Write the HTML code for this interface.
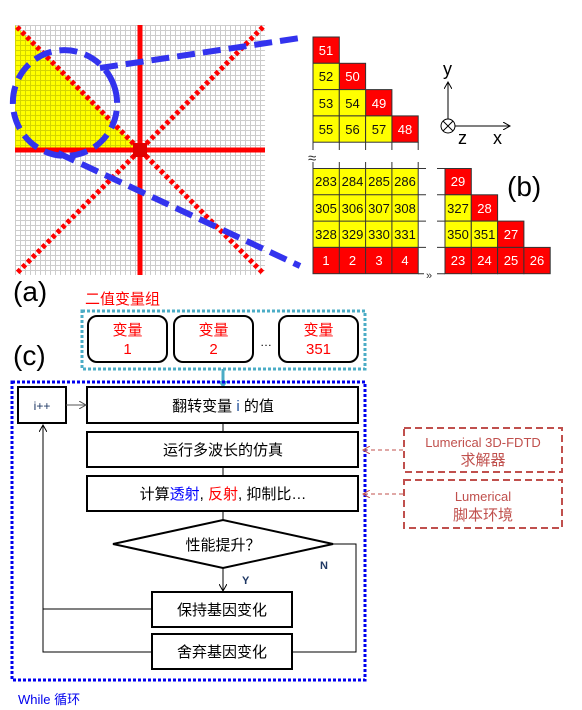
<!DOCTYPE html>
<html><head><meta charset="utf-8"><style>
html,body{margin:0;padding:0;background:#fff;}
svg{display:block;}
text{font-family:"Liberation Sans","Noto Sans CJK SC",sans-serif;}
</style></head><body>
<svg width="582" height="710" viewBox="0 0 582 710" xmlns="http://www.w3.org/2000/svg">
<defs>
<pattern id="g" x="15" y="25" width="5" height="5" patternUnits="userSpaceOnUse">
<rect width="5" height="5" fill="#fff"/>
<path d="M0 0.5H5M0.5 0V5" stroke="#cccccc" stroke-width="1"/>
</pattern>
<pattern id="gy" x="15" y="25" width="5" height="5" patternUnits="userSpaceOnUse">
<rect width="5" height="5" fill="#ffff00"/>
<path d="M0 0.5H5M0.5 0V5" stroke="#d4d400" stroke-width="1"/>
</pattern>
<marker id="ah" markerWidth="8" markerHeight="8" refX="7" refY="4" orient="auto"><path d="M0 0L7 4L0 8" fill="none" stroke="#000" stroke-width="1"/></marker>
<marker id="ahg" markerWidth="8" markerHeight="8" refX="7" refY="4" orient="auto"><path d="M0 0L7 4L0 8" fill="none" stroke="#555" stroke-width="1"/></marker>
<marker id="ahr" markerWidth="8" markerHeight="8" refX="7" refY="4" orient="auto"><path d="M0 0L7 4L0 8" fill="none" stroke="#c0504d" stroke-width="1"/></marker>
</defs>
<rect x="15" y="25" width="250" height="250" fill="url(#g)"/>
<polygon points="15,25 15,150 140,150" fill="url(#gy)"/>
<g stroke="#ff0000">
<line x1="140" y1="25" x2="140" y2="275" stroke-width="5"/>
<line x1="15" y1="150" x2="265" y2="150" stroke-width="5"/>
<line x1="17" y1="27" x2="263" y2="273" stroke-width="5" stroke-dasharray="4 3"/>
<line x1="263" y1="27" x2="17" y2="273" stroke-width="5" stroke-dasharray="4 3"/>
</g>
<rect x="133" y="143" width="14" height="14" fill="#e00000"/>
<g stroke="#3333ee" stroke-width="6" fill="none" stroke-dasharray="18 8">
<ellipse cx="65" cy="103" rx="52" ry="53" transform="rotate(-20 65 103)"/>
<line x1="100" y1="68" x2="300" y2="38"/>
<line x1="58" y1="153" x2="300" y2="266"/>
</g>
<g stroke="#333" stroke-width="1" font-size="13" text-anchor="middle">
<g fill="#ff0000">
<rect x="313" y="37" width="26.3" height="26.3"/>
<rect x="339.3" y="63.3" width="26.3" height="26.3"/>
<rect x="365.6" y="89.6" width="26.3" height="26.3"/>
<rect x="391.9" y="115.9" width="26.3" height="26.3"/>
</g>
<g fill="#ffff00">
<rect x="313" y="63.3" width="26.3" height="26.3"/>
<rect x="313" y="89.6" width="26.3" height="26.3"/>
<rect x="339.3" y="89.6" width="26.3" height="26.3"/>
<rect x="313" y="115.9" width="26.3" height="26.3"/>
<rect x="339.3" y="115.9" width="26.3" height="26.3"/>
<rect x="365.6" y="115.9" width="26.3" height="26.3"/>
</g>
<path d="M313 142V150M339.3 142V150M365.6 142V150M391.9 142V150M418.2 142V150M313 162V169M339.3 162V169M365.6 162V169M391.9 162V169M418.2 162V169" fill="none"/>
<rect x="313" y="168.5" width="105.2" height="78.9" fill="#ffff00"/>
<path d="M339.3 168.5V247.4M365.6 168.5V247.4M391.9 168.5V247.4M313 194.8H418.2M313 221.1H418.2" fill="none"/>
<rect x="313" y="247.4" width="105.2" height="26.3" fill="#ff0000"/>
<path d="M339.3 247.4V273.7M365.6 247.4V273.7M391.9 247.4V273.7" fill="none"/>
<path d="M418 168.5H426M418 194.8H426M418 221.1H426M418 247.4H426M418 273.7H424" fill="none"/>
<path d="M437 168.5H445M437 194.8H445M437 221.1H445M437 247.4H445M437 273.7H445" fill="none"/>
<rect x="445" y="168.5" width="26.3" height="26.3" fill="#ff0000"/>
<rect x="445" y="194.8" width="26.3" height="26.3" fill="#ffff00"/>
<rect x="471.3" y="194.8" width="26.3" height="26.3" fill="#ff0000"/>
<rect x="445" y="221.1" width="26.3" height="26.3" fill="#ffff00"/>
<rect x="471.3" y="221.1" width="26.3" height="26.3" fill="#ffff00"/>
<rect x="497.6" y="221.1" width="26.3" height="26.3" fill="#ff0000"/>
<rect x="445" y="247.4" width="26.3" height="26.3" fill="#ff0000"/>
<rect x="471.3" y="247.4" width="26.3" height="26.3" fill="#ff0000"/>
<rect x="497.6" y="247.4" width="26.3" height="26.3" fill="#ff0000"/>
<rect x="523.9" y="247.4" width="26.3" height="26.3" fill="#ff0000"/>
</g>
<g font-size="13" text-anchor="middle" stroke="none">
<g fill="#fff">
<text x="326" y="55">51</text><text x="352.5" y="81">50</text><text x="379" y="108">49</text><text x="405" y="134">48</text>
<text x="326" y="265">1</text><text x="352.5" y="265">2</text><text x="379" y="265">3</text><text x="405" y="265">4</text>
<text x="458" y="186">29</text><text x="484.5" y="213">28</text><text x="511" y="239">27</text>
<text x="458" y="265">23</text><text x="484.5" y="265">24</text><text x="511" y="265">25</text><text x="537" y="265">26</text>
</g>
<g fill="#111">
<text x="326" y="81">52</text><text x="326" y="108">53</text><text x="352.5" y="108">54</text>
<text x="326" y="134">55</text><text x="352.5" y="134">56</text><text x="379" y="134">57</text>
<text x="326" y="186">283</text><text x="352.5" y="186">284</text><text x="379" y="186">285</text><text x="405" y="186">286</text>
<text x="326" y="213">305</text><text x="352.5" y="213">306</text><text x="379" y="213">307</text><text x="405" y="213">308</text>
<text x="326" y="239">328</text><text x="352.5" y="239">329</text><text x="379" y="239">330</text><text x="405" y="239">331</text>
<text x="458" y="213">327</text><text x="458" y="239">350</text><text x="484.5" y="239">351</text>
</g>
</g>
<text x="308" y="163" font-size="15" fill="#333">≈</text>
<text x="426" y="279" font-size="11" fill="#333">»</text>
<g stroke="#000" stroke-width="1" fill="none">
<line x1="448" y1="126" x2="448" y2="82" marker-end="url(#ah)"/>
<line x1="448" y1="126" x2="510" y2="126" marker-end="url(#ah)"/>
<circle cx="448" cy="126" r="7" fill="#fff"/>
<path d="M443 121L453 131M453 121L443 131"/>
</g>
<text x="443" y="75" font-size="18" fill="#000">y</text>
<text x="458" y="144" font-size="18" fill="#000">z</text>
<text x="493" y="144" font-size="18" fill="#000">x</text>
<text x="507" y="196" font-size="28" fill="#000">(b)</text>
<text x="13" y="301" font-size="28" fill="#000">(a)</text>
<text x="13" y="365" font-size="28" fill="#000">(c)</text>
<text x="85" y="304" font-size="15" fill="#ff0000">二值变量组</text>
<rect x="82" y="311" width="283" height="58" fill="none" stroke="#4bacc6" stroke-width="3" stroke-dasharray="3 2"/>
<g fill="#fff" stroke="#000" stroke-width="2">
<rect x="88" y="316" width="79" height="46" rx="9"/>
<rect x="174" y="316" width="79" height="46" rx="9"/>
<rect x="279" y="316" width="79" height="46" rx="9"/>
</g>
<g font-size="15" fill="#ff0000" text-anchor="middle">
<text x="127.5" y="335">变量</text><text x="127.5" y="354">1</text>
<text x="213.5" y="335">变量</text><text x="213.5" y="354">2</text>
<text x="318.5" y="335">变量</text><text x="318.5" y="354">351</text>
</g>
<text x="266" y="346" font-size="12" fill="#000" text-anchor="middle">…</text>
<line x1="223" y1="369" x2="223" y2="386" stroke="#4bacc6" stroke-width="3"/>
<path d="M218 381L223 388L228 381Z" fill="#4bacc6"/>
<rect x="12" y="382" width="353" height="298" fill="none" stroke="#0000ee" stroke-width="3" stroke-dasharray="3 2"/>
<g fill="#fff" stroke="#000" stroke-width="2">
<rect x="18" y="387" width="48" height="36"/>
<rect x="87" y="387" width="271" height="36"/>
<rect x="87" y="432" width="271" height="35"/>
<rect x="87" y="476" width="271" height="35"/>
<polygon points="113,544 223,520 333,544 223,568"/>
<rect x="152" y="592" width="140" height="35"/>
<rect x="152" y="634" width="140" height="35"/>
</g>
<g stroke="#000" stroke-width="1" fill="none">
<line x1="223" y1="423" x2="223" y2="432"/>
<line x1="223" y1="467" x2="223" y2="476"/>
<line x1="223" y1="511" x2="223" y2="520"/>
<line x1="223" y1="568" x2="223" y2="591" marker-end="url(#ah)"/>
<path d="M152 609H43M152 652H43V425" marker-end="url(#ah)"/>
<path d="M333 544H356V652H292"/>
</g>
<line x1="66" y1="405" x2="86" y2="405" stroke="#555" stroke-width="1" marker-end="url(#ahg)"/>
<text x="42" y="410" font-size="12" fill="#1f3864" text-anchor="middle">i++</text>
<g font-size="15" fill="#000" text-anchor="middle">
<text x="223" y="411">翻转变量 <tspan fill="#1f4e99">i</tspan> 的值</text>
<text x="223" y="455">运行多波长的仿真</text>
<text x="223" y="499">计算<tspan fill="#0000ff">透射</tspan>, <tspan fill="#ff0000">反射</tspan>, 抑制比…</text>
<text x="223" y="550">性能提升？</text>
<text x="222" y="615">保持基因变化</text>
<text x="222" y="657">舍弃基因变化</text>
</g>
<text x="242" y="584" font-size="11" font-weight="bold" fill="#1f3864">Y</text>
<text x="320" y="569" font-size="11" font-weight="bold" fill="#1f3864">N</text>
<text x="18" y="704" font-size="13" fill="#0000ee">While 循环</text>
<g fill="none" stroke="#c0504d" stroke-width="2" stroke-dasharray="7 4">
<rect x="404" y="428" width="158" height="44"/>
<rect x="404" y="480" width="158" height="48"/>
</g>
<g stroke="#c0504d" stroke-width="1" stroke-dasharray="4 3">
<line x1="403" y1="450" x2="363" y2="450" marker-end="url(#ahr)"/>
<line x1="403" y1="494" x2="363" y2="494" marker-end="url(#ahr)"/>
</g>
<g font-size="13" fill="#c0504d" text-anchor="middle">
<text x="483" y="447">Lumerical 3D-FDTD</text>
<text x="483" y="465" font-size="15">求解器</text>
<text x="483" y="501">Lumerical</text>
<text x="483" y="520" font-size="15">脚本环境</text>
</g>
</svg>
</body></html>
